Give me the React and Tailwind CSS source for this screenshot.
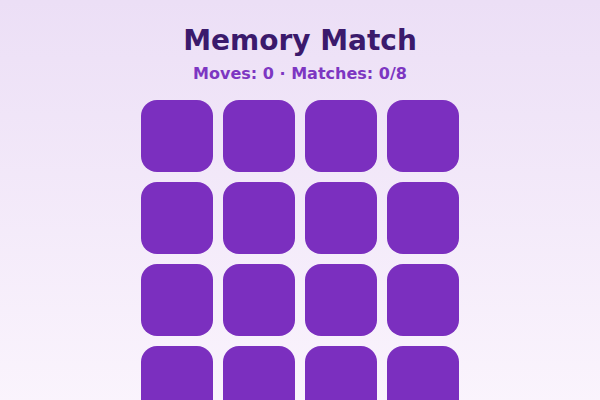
import { useState } from 'react';

const CARDS = Array.from({ length: 16 }, (_, i) => i);

export default function App() {
  const [moves] = useState(0);
  const [matches] = useState(0);

  return (
    <div className="min-h-[480px] bg-gradient-to-b from-[#ecdff6] to-[#fdf8fe] flex flex-col items-center pt-[21px] font-['DejaVu_Sans',sans-serif]">
      <h1 className="text-[28px] leading-10 font-bold text-[#3b1a6c]">Memory Match</h1>
      <p className="mt-[1px] text-base leading-6 font-bold text-[#7d36c2]">Moves: {moves} · Matches: {matches}/8</p>
      <div className="mt-[14px] grid grid-cols-4 gap-[10px]">
        {CARDS.map(i => (
          <button key={i} className="w-[72px] h-[72px] rounded-2xl bg-[#7b2fbf]" />
        ))}
      </div>
    </div>
  );
}
